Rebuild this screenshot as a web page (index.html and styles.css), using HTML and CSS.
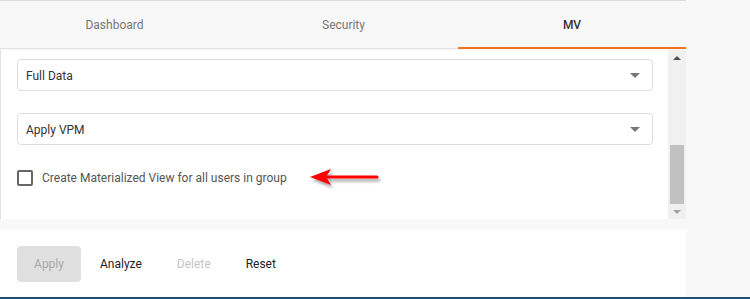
FILE: index.html
```html
<!DOCTYPE html>
<html lang="en">
<head>
  <meta charset="UTF-8">
  <meta name="viewport" content="width=device-width, initial-scale=1.0">
  <title>MV Settings</title>
  <link rel="stylesheet" href="styles.css">
</head>
<body>
  <div class="app">
    <nav class="tabs">
      <a class="tab">Dashboard</a>
      <a class="tab">Security</a>
      <a class="tab active">MV</a>
    </nav>

    <section class="panel">
      <div class="panel-body">
        <div class="select">
          <span>Full Data</span>
          <span class="caret"></span>
        </div>
        <div class="select">
          <span>Apply VPM</span>
          <span class="caret"></span>
        </div>
        <label class="check-row">
          <span class="checkbox"></span>
          <span>Create Materialized View for all users in group</span>
          <svg class="arrow" width="80" height="22" viewBox="0 0 80 22">
            <defs>
              <filter id="shadow" x="-20%" y="-50%" width="140%" height="200%">
                <feDropShadow dx="2" dy="3" stdDeviation="1.5" flood-color="#000" flood-opacity="0.35"/>
              </filter>
            </defs>
            <g filter="url(#shadow)">
              <line x1="18" y1="8" x2="68" y2="8" stroke="#ff0000" stroke-width="3" stroke-linecap="round"/>
              <polygon points="1,8 22,0 17,8 22,16" fill="#ff0000"/>
            </g>
          </svg>
        </label>
      </div>
      <div class="scrollbar">
        <span class="scroll-up"></span>
        <span class="scroll-track"><span class="scroll-thumb"></span></span>
        <span class="scroll-down"></span>
      </div>
    </section>

    <footer class="actions">
      <button class="btn btn-primary" disabled>Apply</button>
      <button class="btn">Analyze</button>
      <button class="btn" disabled>Delete</button>
      <button class="btn">Reset</button>
    </footer>
  </div>
</body>
</html>
```

FILE: styles.css
```css
body {
  margin: 0;
  padding: 0;
  font-family: Roboto, 'Liberation Sans', sans-serif;
  font-size: 12px;
  background-color: #f8f8f8;
  height: 299px;
  overflow: hidden;
  position: relative;
}
body::after {
  content: "";
  position: absolute;
  left: 0;
  right: 0;
  bottom: 0;
  height: 2px;
  background: #1d4f73;
}
.app {
  width: 686px;
  border-top: 1px solid #dcdcdc;
}
.tabs {
  display: flex;
  height: 47px;
  border-bottom: 1px solid #e2e2e2;
  background-color: #f8f8f8;
}
.tab {
  flex: 0 0 229px;
  display: flex;
  align-items: center;
  justify-content: center;
  color: #777;
  font-size: 12px;
  padding-top: 1px;
  border-bottom: 2px solid transparent;
  margin-bottom: -1px;
}
.tab.active {
  color: #333;
  font-weight: 500;
  border-bottom-color: #f07122;
  flex-basis: 228px;
}
.panel {
  display: flex;
  height: 169px;
  margin-top: 1px;
  background: #fff;
  border-left: 1px solid #e0e0e0;
}
.panel-body {
  flex: 1;
  padding: 9px 15px 0 16px;
}
.select {
  display: flex;
  align-items: center;
  justify-content: space-between;
  height: 30px;
  border: 1px solid #dedede;
  border-radius: 4px;
  padding: 0 12px 0 8px;
  color: #333;
  margin-bottom: 22px;
}
.select span:first-child {
  padding-top: 2px;
}
.caret {
  width: 0;
  height: 0;
  border-left: 5px solid transparent;
  border-right: 5px solid transparent;
  border-top: 5px solid #777;
}
.check-row {
  display: flex;
  align-items: center;
  gap: 9px;
  color: #555;
  margin-top: -3px;
}
.checkbox {
  width: 12px;
  height: 12px;
  border: 2px solid #666;
  border-radius: 2px;
}
.arrow {
  margin-left: 13px;
  margin-top: 5px;
}
.scrollbar {
  width: 18px;
  background: #f0f0f0;
  display: flex;
  flex-direction: column;
  align-items: center;
}
.scroll-up {
  margin-top: 6px;
  border-left: 4px solid transparent;
  border-right: 4px solid transparent;
  border-bottom: 4px solid #505050;
}
.scroll-track {
  flex: 1;
  width: 100%;
  display: flex;
  flex-direction: column;
  justify-content: flex-end;
  padding-bottom: 6px;
}
.scroll-thumb {
  display: block;
  margin: 0 2px;
  height: 59px;
  background: #c1c1c1;
}
.scroll-down {
  margin-bottom: 5px;
  border-left: 4px solid transparent;
  border-right: 4px solid transparent;
  border-top: 4px solid #a3a3a3;
}
.actions {
  display: flex;
  align-items: center;
  height: 67px;
  margin-top: 11px;
  background: #fff;
  padding-left: 17px;
}
.btn {
  font-family: inherit;
  font-size: 12px;
  background: none;
  border: none;
  color: #222;
  padding: 0;
  margin-right: 35px;
  height: 36px;
  margin-top: 1px;
}
.btn[disabled] {
  color: #c4c4c4;
}
.btn-primary {
  width: 64px;
  background: #e0e0e0;
  border-radius: 4px;
  margin-right: 19px;
}
.btn-primary[disabled] {
  color: #a9a9a9;
}
```
